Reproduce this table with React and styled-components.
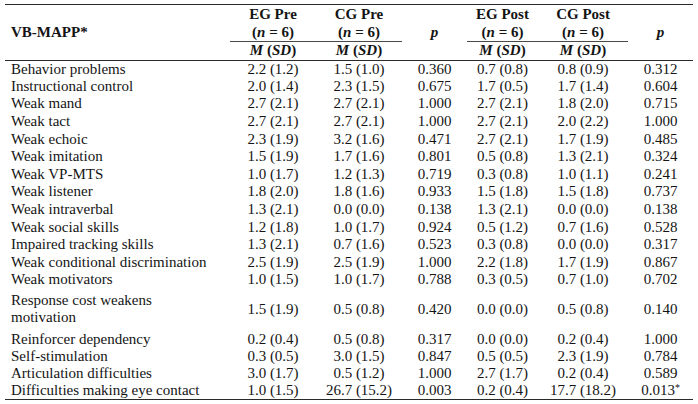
import React from "react";
import styled, { createGlobalStyle } from "styled-components";

const GlobalStyle = createGlobalStyle`
  body {
    margin: 0;
    background: #fff;
  }
`;

const Page = styled.div`
  padding: 4px 0 0 5px;
`;

const Table = styled.table`
  width: 688px;
  border-collapse: collapse;
  table-layout: fixed;
  font-family: "Liberation Serif", "Times New Roman", serif;
  font-size: 15px;
  color: #141414;
`;

const HeadRow = styled.tr`
  height: ${(p) => p.$h}px;
`;

const Head = styled.th`
  padding: 0;
  font-weight: bold;
  text-align: center;
  vertical-align: middle;
  line-height: 17px;
  border-top: ${(p) => (p.$top ? "1.5px solid #2a2a2a" : "none")};
  border-bottom: ${(p) =>
    p.$bottom ? "1.5px solid #2a2a2a" : p.$rule ? "1.5px solid #4a4a4a" : "none"};
  text-align: ${(p) => (p.$left ? "left" : "center")};
  padding-left: ${(p) => (p.$left ? "6px" : "0")};
`;

const Row = styled.tr`
  height: ${(p) => p.$h}px;
`;

const Label = styled.td`
  padding: ${(p) => (p.$tall ? "3px 0 5px 6px" : "0 0 0 6px")};
  line-height: 17px;
  white-space: nowrap;
  border-bottom: ${(p) => (p.$last ? "1.5px solid #2a2a2a" : "none")};
`;

const Cell = styled.td`
  padding: 0;
  text-align: center;
  vertical-align: middle;
  line-height: 17px;
  white-space: nowrap;
  border-bottom: ${(p) => (p.$last ? "1.5px solid #2a2a2a" : "none")};
`;

const Star = styled.sup`
  font-size: 10px;
  vertical-align: 4px;
  line-height: 0;
`;

const data = [
  ["Behavior problems", "2.2 (1.2)", "1.5 (1.0)", "0.360", "0.7 (0.8)", "0.8 (0.9)", "0.312"],
  ["Instructional control", "2.0 (1.4)", "2.3 (1.5)", "0.675", "1.7 (0.5)", "1.7 (1.4)", "0.604"],
  ["Weak mand", "2.7 (2.1)", "2.7 (2.1)", "1.000", "2.7 (2.1)", "1.8 (2.0)", "0.715"],
  ["Weak tact", "2.7 (2.1)", "2.7 (2.1)", "1.000", "2.7 (2.1)", "2.0 (2.2)", "1.000"],
  ["Weak echoic", "2.3 (1.9)", "3.2 (1.6)", "0.471", "2.7 (2.1)", "1.7 (1.9)", "0.485"],
  ["Weak imitation", "1.5 (1.9)", "1.7 (1.6)", "0.801", "0.5 (0.8)", "1.3 (2.1)", "0.324"],
  ["Weak VP-MTS", "1.0 (1.7)", "1.2 (1.3)", "0.719", "0.3 (0.8)", "1.0 (1.1)", "0.241"],
  ["Weak listener", "1.8 (2.0)", "1.8 (1.6)", "0.933", "1.5 (1.8)", "1.5 (1.8)", "0.737"],
  ["Weak intraverbal", "1.3 (2.1)", "0.0 (0.0)", "0.138", "1.3 (2.1)", "0.0 (0.0)", "0.138"],
  ["Weak social skills", "1.2 (1.8)", "1.0 (1.7)", "0.924", "0.5 (1.2)", "0.7 (1.6)", "0.528"],
  ["Impaired tracking skills", "1.3 (2.1)", "0.7 (1.6)", "0.523", "0.3 (0.8)", "0.0 (0.0)", "0.317"],
  ["Weak conditional discrimination", "2.5 (1.9)", "2.5 (1.9)", "1.000", "2.2 (1.8)", "1.7 (1.9)", "0.867"],
  ["Weak motivators", "1.0 (1.5)", "1.0 (1.7)", "0.788", "0.3 (0.5)", "0.7 (1.0)", "0.702"],
  [["Response cost weakens", "motivation"], "1.5 (1.9)", "0.5 (0.8)", "0.420", "0.0 (0.0)", "0.5 (0.8)", "0.140"],
  ["Reinforcer dependency", "0.2 (0.4)", "0.5 (0.8)", "0.317", "0.0 (0.0)", "0.2 (0.4)", "1.000"],
  ["Self-stimulation", "0.3 (0.5)", "3.0 (1.5)", "0.847", "0.5 (0.5)", "2.3 (1.9)", "0.784"],
  ["Articulation difficulties", "3.0 (1.7)", "0.5 (1.2)", "1.000", "2.7 (1.7)", "0.2 (0.4)", "0.589"],
  ["Difficulties making eye contact", "1.0 (1.5)", "26.7 (15.2)", "0.003", "0.2 (0.4)", "17.7 (18.2)", "0.013*"],
];

const widths = [225, 86, 86, 65, 71, 90, 65];

const renderValue = (v) =>
  v.endsWith("*") ? (
    <>
      {v.slice(0, -1)}
      <Star>*</Star>
    </>
  ) : (
    v
  );

const App = () => {
  return (
    <Page>
      <GlobalStyle />
      <Table>
        <colgroup>
          {widths.map((w, i) => (
            <col key={i} style={{ width: w }} />
          ))}
        </colgroup>
        <thead>
          <HeadRow $h={19}>
            <Head rowSpan={3} $top $bottom $left>
              VB-MAPP*
            </Head>
            <Head $top>EG Pre</Head>
            <Head $top>CG Pre</Head>
            <Head rowSpan={3} $top $bottom>
              <i>p</i>
            </Head>
            <Head $top>EG Post</Head>
            <Head $top>CG Post</Head>
            <Head rowSpan={3} $top $bottom>
              <i>p</i>
            </Head>
          </HeadRow>
          <HeadRow $h={17}>
            {[0, 1].map((k) => (
              <React.Fragment key={k}>
                <Head $rule>
                  (<i>n</i> = 6)
                </Head>
                <Head $rule>
                  (<i>n</i> = 6)
                </Head>
              </React.Fragment>
            ))}
          </HeadRow>
          <HeadRow $h={19}>
            {[0, 1, 2, 3].map((k) => (
              <Head key={k} $bottom>
                <i>M</i> (<i>SD</i>)
              </Head>
            ))}
          </HeadRow>
        </thead>
        <tbody>
          {data.map((row, i) => {
            const tall = Array.isArray(row[0]);
            const last = i === data.length - 1;
            return (
              <Row key={i} $h={tall ? 42 : i > 13 ? 17 : 17.6}>
                <Label $tall={tall} $last={last}>
                  {tall ? (
                    <>
                      {row[0][0]}
                      <br />
                      {row[0][1]}
                    </>
                  ) : (
                    row[0]
                  )}
                </Label>
                {row.slice(1).map((v, j) => (
                  <Cell key={j} $last={last}>
                    {renderValue(v)}
                  </Cell>
                ))}
              </Row>
            );
          })}
        </tbody>
      </Table>
    </Page>
  );
};

export default App;
